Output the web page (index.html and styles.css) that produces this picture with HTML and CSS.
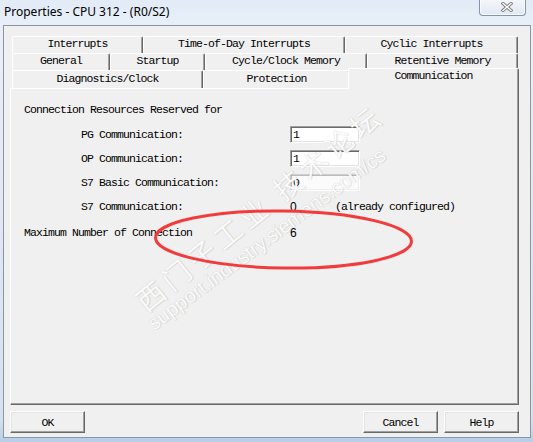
FILE: index.html
```html
<!DOCTYPE html>
<html>
<head>
<meta charset="utf-8">
<link rel="stylesheet" href="styles.css">
</head>
<body>
<div class="window">
  <div class="titlebar">
    <span class="title">Properties - CPU 312 - (R0/S2)</span>
    <div class="close">
      <svg width="12" height="10" viewBox="0 0 12 10">
        <path d="M2 1.5 L10 8.5 M10 1.5 L2 8.5" stroke="#7d7d7d" stroke-width="3.2" stroke-linecap="square"/>
        <path d="M2 1.5 L10 8.5 M10 1.5 L2 8.5" stroke="#ffffff" stroke-width="1.4" stroke-linecap="square"/>
      </svg>
    </div>
  </div>
  <div class="client">
    <div class="tabs">
      <div class="tabrow">
        <div class="tab t131">Interrupts</div>
        <div class="tab t202">Time-of-Day Interrupts</div>
        <div class="tab t173">Cyclic Interrupts</div>
      </div>
      <div class="tabrow">
        <div class="tab t98">General</div>
        <div class="tab t95">Startup</div>
        <div class="tab t162">Cycle/Clock Memory</div>
        <div class="tab t151">Retentive Memory</div>
      </div>
      <div class="tabrow last">
        <div class="tab t191">Diagnostics/Clock</div>
        <div class="tab t147">Protection</div>
        <div class="tab t168 selected">Communication</div>
      </div>
    </div>
    <div class="panel">
      <div class="heading">Connection Resources Reserved for</div>
      <div class="form">
        <span class="lbl">PG Communication:</span>
        <span class="field">1</span>
        <span class="lbl">OP Communication:</span>
        <span class="field">1</span>
        <span class="lbl">S7 Basic Communication:</span>
        <span class="field disabled">0</span>
        <span class="lbl">S7 Communication:</span>
        <span class="value"><span class="num">0</span><span class="note">(already configured)</span></span>
      </div>
      <div class="maxrow">
        <span class="maxlbl">Maximum Number of Connection</span>
        <span class="num">6</span>
      </div>
    </div>
    <div class="buttons">
      <div class="btn">OK</div>
      <div class="spacer"></div>
      <div class="btn">Cancel</div>
      <div class="btn">Help</div>
    </div>
  </div>
  <div class="watermark cn">西门子工业 技术论坛</div>
  <div class="watermark en">support.industry.siemens.com/cs</div>
  <svg class="mark" width="533" height="442" viewBox="0 0 533 442">
    <ellipse cx="283.5" cy="239.5" rx="128" ry="28.5" transform="rotate(0.8 283.5 239.5)" fill="none" stroke="#f03c3c" stroke-width="3"/>
  </svg>
</div>
</body>
</html>
```
FILE: styles.css
```css
* { box-sizing: border-box; }
body {
  margin: 0;
  width: 533px;
  height: 442px;
  overflow: hidden;
  background: linear-gradient(to bottom, #e2ebf6 0px, #e8eff8 25px, #d3e1f0 420px, #b6cde8 442px);
}
.window {
  position: relative;
  width: 533px;
  height: 442px;
}
.titlebar {
  height: 25px;
  display: flex;
  align-items: flex-start;
}
.title {
  font-family: "Noto Sans", sans-serif;
  font-size: 12px;
  line-height: 24px;
  margin-left: 4px;
  color: #000;
}
.close {
  margin-left: auto;
  margin-right: 7px;
  margin-top: -1px;
  width: 47px;
  height: 17px;
  border: 1px solid #8494aa;
  border-top: none;
  border-radius: 0 0 4px 4px;
  background: linear-gradient(#f4f7fb, #e1e8f1);
  box-shadow: inset 0 0 0 1px rgba(255,255,255,0.7);
  display: flex;
  align-items: center;
  justify-content: center;
  padding-left: 8px;
}
.client {
  margin-left: 3px;
  width: 528px;
  height: 413px;
  border: 1px solid #8f959c;
  background: #f0f0f0;
  padding-top: 10px;
  font-family: "Liberation Mono", monospace;
  font-size: 11.5px;
  letter-spacing: -0.9px;
  color: #000;
}
.tabs {
  margin-left: 8px;
  width: 506px;
}
.tabrow {
  display: flex;
  height: 17px;
  align-items: flex-end;
}
.tabrow.last { height: 18px; }
.tab {
  height: 17px;
  border-top: 1px solid #ffffff;
  border-left: 1px solid #ffffff;
  border-right: 1px solid #696969;
  box-shadow: inset -1px 0 0 #a0a0a0;
  border-radius: 2px 2px 0 0;
  display: flex;
  justify-content: center;
  align-items: center;
  padding-bottom: 2px;
  line-height: 12px;
  white-space: nowrap;
  background: #f0f0f0;
}
.tabrow.last .tab { height: 18px; padding-bottom: 2px; }
.t131 { width: 131px; }
.t202 { width: 202px; }
.t173 { width: 173px; }
.t98 { width: 98px; }
.t95 { width: 95px; }
.t162 { width: 162px; }
.t151 { width: 151px; }
.t191 { width: 191px; }
.t147 { width: 147px; }
.t168 { width: 168px; }
.tabrow.last .tab.selected {
  height: 21px;
  margin: 0 -2px -1px -2px;
  width: 171px;
  align-items: flex-start;
  padding-top: 1px;
  position: relative;
  z-index: 1;
}
.panel {
  margin-left: 6px;
  width: 509px;
  height: 317px;
  border-top: 1px solid #ffffff;
  border-left: 1px solid #ffffff;
  border-right: 1px solid #696969;
  border-bottom: 1px solid #696969;
  box-shadow: inset -1px -1px 0 #a0a0a0;
  padding: 14px 0 0 13px;
}
.heading {
  line-height: 14px;
  height: 14px;
}
.form {
  margin-top: 9px;
  margin-left: 57px;
  display: grid;
  grid-template-columns: 209px 1fr;
  grid-auto-rows: 17px;
  row-gap: 7px;
  align-items: center;
}
.field {
  width: 70px;
  height: 17px;
  background: #ffffff;
  border-top: 1px solid #a0a0a0;
  border-left: 1px solid #a0a0a0;
  border-right: 1px solid #ffffff;
  border-bottom: 1px solid #ffffff;
  box-shadow: inset 1px 1px 0 #696969, inset -1px -1px 0 #e3e3e3;
  padding-left: 2px;
  line-height: 15px;
}
.field.disabled {
  background: #fbfbfb;
  border-top-color: #cfcfcf;
  border-left-color: #cfcfcf;
  box-shadow: inset 1px 1px 0 #bcbcbc, inset -1px -1px 0 #ededed;
}
.value {
  display: flex;
  align-items: center;
}
.num {
  font-family: "Liberation Sans", sans-serif;
  font-size: 12px;
  letter-spacing: 0;
  width: 45px;
}
.maxrow {
  margin-top: 9px;
  display: flex;
  align-items: center;
  height: 17px;
}
.maxlbl { width: 266px; }
.buttons {
  display: flex;
  margin: 6px 0 0 6px;
  width: 509px;
  gap: 6px;
}
.spacer { flex: 1; }
.btn {
  width: 75px;
  height: 22px;
  border-top: 1px solid #ffffff;
  border-left: 1px solid #ffffff;
  border-right: 1px solid #696969;
  border-bottom: 1px solid #696969;
  box-shadow: inset -1px -1px 0 #a0a0a0, inset 1px 1px 0 #e3e3e3;
  display: flex;
  align-items: center;
  justify-content: center;
  background: #f0f0f0;
}
.watermark {
  position: absolute;
  white-space: nowrap;
  transform-origin: 0 50%;
  color: rgba(255,255,255,0.95);
  text-shadow: 0 0 1px rgba(120,120,120,0.35), 1px 1px 1px rgba(0,0,0,0.08);
  pointer-events: none;
}
.watermark.cn {
  left: 139px;
  top: 289px;
  height: 30px;
  line-height: 30px;
  font-family: "Noto Sans CJK SC", sans-serif;
  font-size: 28px;
  letter-spacing: 5px;
  transform: rotate(-39deg);
}
.watermark.en {
  left: 150px;
  top: 315px;
  height: 20px;
  line-height: 20px;
  font-family: "Liberation Sans", sans-serif;
  font-size: 20px;
  transform: rotate(-36.5deg);
}
.mark {
  position: absolute;
  left: 0;
  top: 0;
  pointer-events: none;
}
```
